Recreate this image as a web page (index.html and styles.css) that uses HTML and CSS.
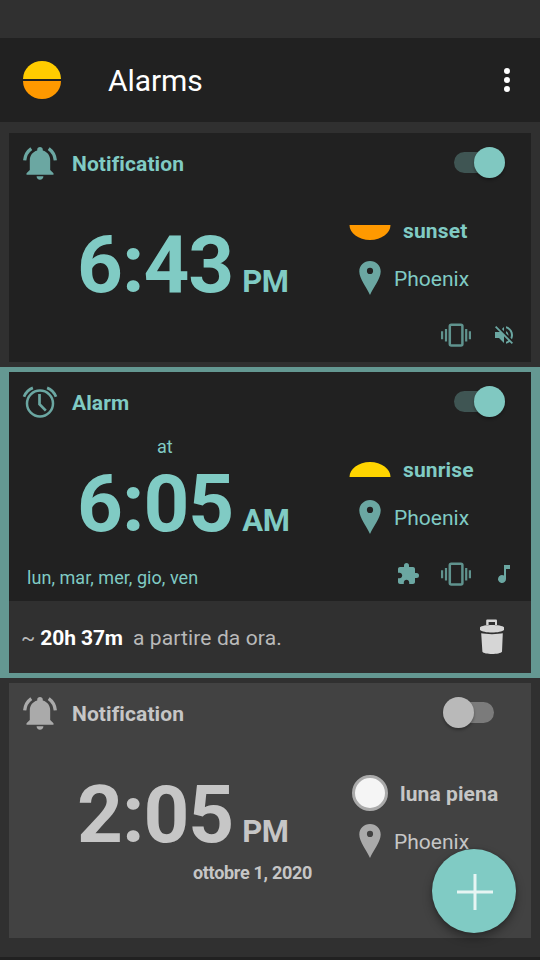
FILE: index.html
```html
<!DOCTYPE html>
<html lang="it">
<head>
<meta charset="utf-8">
<title>Alarms</title>
<link rel="stylesheet" href="styles.css">
</head>
<body>
<svg class="sprite" aria-hidden="true">
  <symbol id="bell" viewBox="0 0 36 36">
    <path d="M18 2c1.600 0 2.800 1.100 2.800 2.700v.9c4.600 1.300 7.400 4.900 7.400 9.800v9.600l3.300 3.300v1.400H4.500v-1.400l3.300-3.300v-9.600c0-4.900 2.800-8.500 7.400-9.800v-.9C15.200 3.100 16.400 2 18 2zM14.600 31.300h6.800c0 2-1.500 3.400-3.400 3.400s-3.400-1.400-3.400-3.400z" fill="currentColor"/>
    <path d="M9.300 3.600C5.500 6.300 3.100 10.300 2.700 15.400M26.700 3.600c3.800 2.700 6.200 6.700 6.600 11.800" fill="none" stroke="currentColor" stroke-width="3.300"/>
  </symbol>
  <symbol id="clock" viewBox="0 0 36 36">
    <g fill="none" stroke="currentColor">
      <circle cx="18" cy="19.500" r="13" stroke-width="2.500"/>
      <path d="M17.500 10v10.300l6.300 6.300" stroke-width="2.700"/>
      <path d="M10.900 3.900C7 5.400 3.800 8.500 2 12.700M25.100 3.900c3.900 1.500 7.100 4.600 8.900 8.800" stroke-width="2.800"/>
    </g>
  </symbol>
  <symbol id="pin" viewBox="0 0 22 34">
    <path d="M11 0C5 0 .300 4.600.300 10.500.300 17.500 7.500 26 11 34c3.500-8 10.700-16.500 10.700-23.500C21.700 4.600 17 0 11 0zm0 6.800a3.100 3.100 0 1 1 0 6.200 3.100 3.100 0 0 1 0-6.200z" fill="currentColor"/>
  </symbol>
  <symbol id="vibrate" viewBox="0 0 30 24">
    <g fill="none" stroke="currentColor">
      <rect x="8.800" y="1.700" width="12.600" height="20.800" rx="1.500" stroke-width="2.500"/>
      <path d="M5 6v12.500M25.200 6v12.500M1.100 8.200v8M28.900 8.200v8" stroke-width="2.200"/>
    </g>
  </symbol>
  <symbol id="mute" viewBox="0 0 24 24">
    <path d="M16.500 12A4.500 4.500 0 0 0 14 7.970v2.210l2.450 2.450c.030-.200.050-.410.050-.630zm2.500 0c0 .940-.200 1.820-.540 2.640l1.510 1.510A8.800 8.800 0 0 0 21 12c0-4.280-2.990-7.860-7-8.770v2.060c2.890.860 5 3.540 5 6.710zM4.270 3 3 4.270 7.730 9H3v6h4l5 5v-6.730l4.250 4.250c-.670.520-1.420.930-2.250 1.180v2.060a8.990 8.990 0 0 0 3.690-1.810L19.730 21 21 19.730l-9-9L4.270 3zM12 4 9.910 6.090 12 8.180V4z" fill="currentColor"/>
  </symbol>
  <symbol id="puzzle" viewBox="0 0 24 24">
    <path d="M20.500 11H19V7c0-1.100-.900-2-2-2h-4V3.500a2.500 2.500 0 0 0-5 0V5H4c-1.100 0-1.990.900-1.990 2v3.800H3.500c1.490 0 2.700 1.210 2.700 2.700s-1.210 2.700-2.700 2.700H2V20c0 1.100.900 2 2 2h3.800v-1.500c0-1.490 1.210-2.700 2.700-2.700s2.700 1.210 2.700 2.700V22H17c1.100 0 2-.900 2-2v-4h1.500a2.500 2.500 0 0 0 0-5z" fill="currentColor"/>
  </symbol>
  <symbol id="note" viewBox="0 0 24 24">
    <path d="M12 3v10.550A4 4 0 1 0 14 17V7h4V3h-6z" fill="currentColor"/>
  </symbol>
  <symbol id="trash" viewBox="0 0 24 36">
    <g fill="currentColor">
      <path d="M6.200 6V1.800C6.200 1 6.700.500 7.500.500h8.200c.800 0 1.300.500 1.300 1.300V6h-2V3H8.600v3z"/>
      <path d="M0 8.300C2.500 5.200 21.500 5.200 24 8.300v2.800c-3 3.300-21 3.300-24 0z"/>
      <path d="M1.200 14.300c4 1.100 17.600 1.100 21.600 0L22 32.800c-2 3-18 3-19.600 0z"/>
    </g>
  </symbol>
</svg>

<div class="status"></div>
<header class="toolbar">
  <svg class="logo" viewBox="0 0 38 38"><path d="M0 18a19 18 0 0 1 38 0z" fill="#ffcc00"/><path d="M0 20a19 18 0 0 0 38 0z" fill="#ff9900"/></svg>
  <h1 class="heading">Alarms</h1>
  <svg class="more" viewBox="0 0 6 24" fill="#fff"><circle cx="3" cy="3" r="3"/><circle cx="3" cy="12" r="3"/><circle cx="3" cy="21" r="3"/></svg>
</header>

<main class="list">
  <div class="row">
    <article class="card">
      <div class="top"><svg class="kind"><use href="#bell"/></svg><h2 class="title">Notification</h2><span class="switch"></span></div>
      <div class="content">
        <div class="when"><span class="prefix"></span><div class="time">6:43<span class="ampm">PM</span></div></div>
        <div class="details">
          <div class="event"><span class="slot"><svg class="sun set" viewBox="0 0 42 15"><path d="M.500 0h41C41.500 8 32.500 15 21 15S.500 8 .500 0z" fill="#ff9900"/></svg></span><b>sunset</b></div>
          <div class="place"><svg class="pin"><use href="#pin"/></svg><span>Phoenix</span></div>
        </div>
      </div>
      <div class="extras"><span class="days"></span><svg class="vibrate"><use href="#vibrate"/></svg><svg class="small"><use href="#mute"/></svg></div>
    </article>
  </div>

  <div class="row selected">
    <article class="card">
      <div class="top"><svg class="kind"><use href="#clock"/></svg><h2 class="title">Alarm</h2><span class="switch"></span></div>
      <div class="content">
        <div class="when"><span class="prefix">at</span><div class="time">6:05<span class="ampm">AM</span></div></div>
        <div class="details">
          <div class="event"><span class="slot"><svg class="sun rise" viewBox="0 0 42 15"><path d="M.500 15h41C41.500 7 32.500 0 21 0S.500 7 .500 15z" fill="#ffd500"/></svg></span><b>sunrise</b></div>
          <div class="place"><svg class="pin"><use href="#pin"/></svg><span>Phoenix</span></div>
        </div>
      </div>
      <div class="extras"><span class="days">lun, mar, mer, gio, ven</span><svg class="puzzle"><use href="#puzzle"/></svg><svg class="vibrate"><use href="#vibrate"/></svg><svg class="small"><use href="#note"/></svg></div>
    </article>
    <div class="remaining"><span>~</span><b>20h 37m</b><span class="from-now">a partire da ora.</span><svg class="trash"><use href="#trash"/></svg></div>
  </div>

  <div class="row">
    <article class="card off">
      <div class="top"><svg class="kind"><use href="#bell"/></svg><h2 class="title">Notification</h2><span class="switch"></span></div>
      <div class="content">
        <div class="when"><span class="prefix"></span><div class="time">2:05<span class="ampm">PM</span></div><div class="date">ottobre 1, 2020</div></div>
        <div class="details">
          <div class="event"><span class="slot"><span class="moon"></span></span><b>luna piena</b></div>
          <div class="place"><svg class="pin"><use href="#pin"/></svg><span>Phoenix</span></div>
        </div>
      </div>
    </article>
  </div>
</main>
<footer class="bottom"></footer>
<button class="fab" aria-label="+"><svg viewBox="0 0 36 36"><path d="M18 0v36M0 18h36" stroke="#e6f5f3" stroke-width="3"/></svg></button>
</body>
</html>
```
FILE: styles.css
```css
* { box-sizing: border-box; }
body {
  margin: 0;
  width: 540px;
  height: 960px;
  overflow: hidden;
  position: relative;
  display: flex;
  flex-direction: column;
  background: #303030;
  font-family: Roboto, "Liberation Sans", sans-serif;
  font-size: 21px;
  color: #80cbc4;
}
svg { display: block; flex: none; }
.sprite { position: absolute; width: 0; height: 0; }
.status { height: 38px; flex: none; }
.toolbar {
  height: 84px;
  flex: none;
  background: #212121;
  display: flex;
  align-items: center;
  padding: 0 30px 0 23px;
}
.logo { width: 38px; height: 38px; }
.heading { margin: 0 auto 0 47px; padding-top: 2px; font-size: 30px; font-weight: 400; line-height: 36px; letter-spacing: -.1px; color: #fff; }
.more { width: 6px; height: 24px; }

.list { padding-top: 6px; flex: 1; }
.row { padding: 5px 9px; }
.selected { background: #649892; }
.card { height: 229px; background: #212121; display: flex; flex-direction: column; }
.card.off { height: 255px; background: #424242; color: #c6c6c6; }

.top { height: 60px; flex: none; display: flex; align-items: center; padding: 0 26px 0 13px; }
.kind { width: 36px; height: 36px; color: #6ba7a2; }
.title { margin: 0 auto 0 14px; padding-top: 2px; font-size: 21px; line-height: 26px; font-weight: 700; letter-spacing: .1px; }
.off .kind, .off .pin { color: #aaa; }

.switch {
  position: relative;
  width: 51px;
  height: 21px;
  margin-bottom: 2px;
  border-radius: 11px;
  background: linear-gradient(#3f5553, #3f5553) left / 42px 21px no-repeat;
}
.switch::after {
  content: "";
  position: absolute;
  top: -5px;
  right: 0;
  width: 31px;
  height: 31px;
  border-radius: 50%;
  background: #80c8c1;
  box-shadow: 0 2px 3px rgba(0, 0, 0, .3);
}
.off .switch { margin-right: 11px; background: linear-gradient(#7b7b7b, #7b7b7b) right / 42px 21px no-repeat; }
.off .switch::after { right: 20px; background: #b9b9b9; }

.content { display: grid; grid-template-columns: 331px 191px; }
.when { display: flex; flex-direction: column; padding-left: 68px; }
.prefix { height: 30px; font-size: 18px; line-height: 30px; padding-left: 80px; }
.time { height: 84px; line-height: 84px; font-size: 80px; font-weight: 700; letter-spacing: -1px; white-space: nowrap; }
.ampm { font-size: 31px; margin-left: 9px; letter-spacing: -.4px; }
.date { height: 24px; margin-top: 4px; font-size: 18px; line-height: 24px; font-weight: 700; letter-spacing: -.3px; text-align: right; padding-right: 28px; }

.details { padding-top: 14px; }
.off .details { padding-top: 27px; }
.event, .place { display: flex; align-items: center; height: 48px; }
.event { padding-left: 9px; }
.event b { letter-spacing: .15px; }
.slot { flex: none; min-width: 36px; margin-right: 12px; }
.sun { width: 42px; height: 15px; }
.sun.set { margin-top: 2px; }
.sun.rise { margin-bottom: 2px; }
.off .event { padding-left: 12px; }
.off .event b { letter-spacing: .1px; }
.moon { display: block; width: 36px; height: 36px; border: 3px solid #aaa; border-radius: 50%; background: #f5f5f5; }
.off .moon { margin-bottom: 2px; }
.place { padding-left: 19px; }
.pin { width: 22px; height: 34px; margin: 0 13px 2px 0; color: #6ba7a2; }

.extras { display: flex; align-items: center; height: 42px; padding: 0 15px 0 18px; margin-top: 7px; color: #6ba7a2; }
.days { margin-right: auto; padding-top: 6px; font-size: 18px; letter-spacing: .05px; color: #80cbc4; }
.vibrate { width: 30px; height: 24px; opacity: .85; }
.puzzle { width: 24px; height: 24px; margin-right: 21px; }
.small { width: 24px; height: 24px; margin-left: 21px; }

.remaining { height: 72px; background: #303030; display: flex; align-items: center; padding: 0 27px 0 12px; color: #b9b9b9; }
.remaining span, .remaining b { padding-top: 1px; }
.remaining b { margin: 0 10px 0 5px; letter-spacing: -.1px; color: #fff; }
.remaining .from-now { margin-right: auto; letter-spacing: .12px; }
.trash { width: 24px; height: 36px; color: #d6d6d6; }

.bottom { height: 3px; flex: none; background: #212121; }
.fab {
  position: absolute;
  right: 24px;
  bottom: 27px;
  width: 84px;
  height: 84px;
  padding: 2px 0 0 2px;
  border: 0;
  border-radius: 50%;
  background: #80cbc4;
  box-shadow: 0 5px 10px rgba(0, 0, 0, .35), 0 0 3px rgba(0, 0, 0, .2);
  display: grid;
  place-items: center;
}
.fab svg { width: 36px; height: 36px; }
```
